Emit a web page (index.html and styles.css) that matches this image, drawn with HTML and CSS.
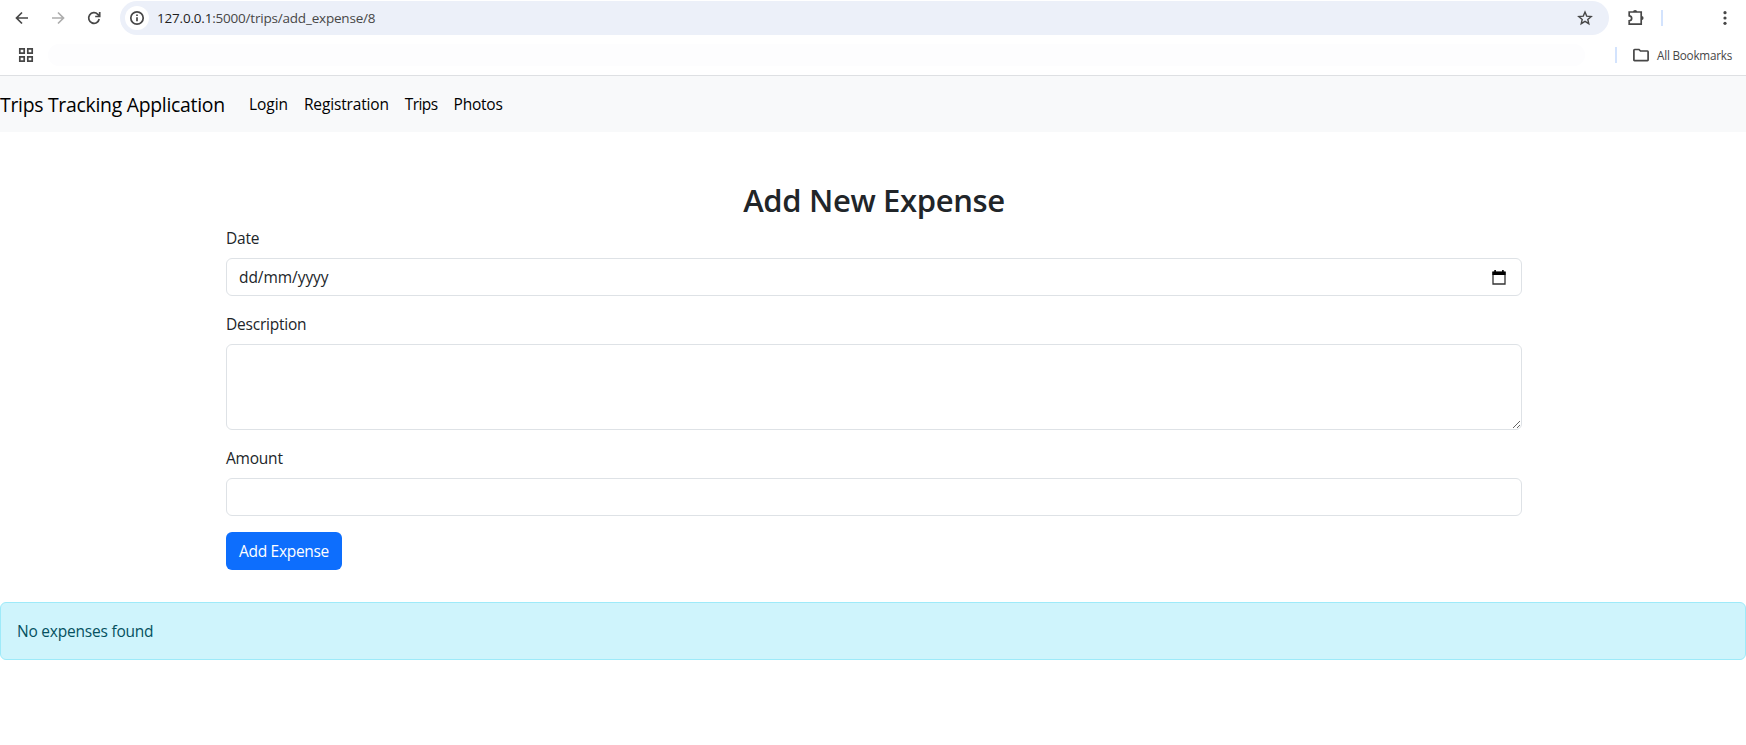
FILE: index.html
```html
<!DOCTYPE html>
<html lang="en">
<head>
<meta charset="utf-8">
<title>Add New Expense</title>
<link rel="stylesheet" href="styles.css">
</head>
<body>
<header class="browser">
  <div class="toolbar">
    <svg class="icon back" viewBox="0 0 16 16"><path d="M14 8H3M8 2.500 2.500 8 8 13.500"/></svg>
    <svg class="icon forward" viewBox="0 0 16 16"><path d="M2 8h11M8 2.500 13.500 8 8 13.500"/></svg>
    <svg class="icon reload" viewBox="0 0 16 16"><path d="M13.200 9A5.300 5.300 0 1 1 11.800 4.300L13.500 6M13.700 2v4.500H9.200"/></svg>
    <div class="address">
      <span class="site-info"><svg class="icon" viewBox="0 0 16 16"><circle cx="8" cy="8" r="6.200"/><path d="M8 7.200v4M8 4.600v1.500"/></svg></span>
      <span class="url"><b>127.0.0.1</b>:5000/trips/add_expense/8</span>
      <svg class="icon star" viewBox="0 0 16 16"><path d="M8 2 9.700 6.100 14.200 6.500 10.800 9.400 11.800 13.700 8 11.400 4.200 13.700 5.200 9.400 1.800 6.500 6.300 6.100Z"/></svg>
    </div>
    <svg class="icon puzzle" viewBox="0 0 18 18"><path d="M2.200 3H14.200V15.200H2.200V11.800C5.500 11.600 5.500 7 2.200 6.800Z"/><path class="solid" d="M6 3a2.100 2.100 0 0 1 4.200 0ZM14.500 7a2.100 2.100 0 0 1 0 4.200Z"/></svg>
    <i class="divider"></i>
    <svg class="icon dots" viewBox="0 0 16 16"><circle cx="8" cy="2.700" r="1.600"/><circle cx="8" cy="8" r="1.600"/><circle cx="8" cy="13.300" r="1.600"/></svg>
  </div>
  <div class="bookmarks">
    <svg class="icon apps" viewBox="0 0 16 16"><path d="M1.800 1.800h4.400v4.400h-4.400zM9.800 1.800h4.400v4.400h-4.400zM1.800 9.800h4.400v4.400h-4.400zM9.800 9.800h4.400v4.400h-4.400z"/></svg>
    <div class="bookmark-strip"></div>
    <i class="divider"></i>
    <svg class="icon folder" viewBox="0 0 16 14"><path d="M.9 12V2.200Q.9 1.500 1.600 1.500H6L7.500 3h7q.6 0 .6.700V12q0 .6-.6.600h-13Q.9 12.600.9 12Z"/></svg>
    <span class="bookmarks-label">All Bookmarks</span>
  </div>
</header>
<nav class="navbar">
  <a class="brand">Trips Tracking Application</a>
  <a class="link login">Login</a>
  <a class="link registration">Registration</a>
  <a class="link trips">Trips</a>
  <a class="link photos">Photos</a>
</nav>
<main>
  <form class="container">
    <h2>Add New Expense</h2>
    <label>Date</label>
    <div class="control date"><span>dd/mm/yyyy</span>
      <svg class="calendar" viewBox="0 0 14 15"><path class="edge" d="M1 2.500h12V14H1Z"/><path class="top" d="M.4 1.500h13.200V5H.4ZM2.300 0h1.600v2H2.300ZM10.100 0h1.600v2h-1.600Z"/></svg>
    </div>
    <label for="description">Description</label>
    <textarea id="description" class="control description"></textarea>
    <label for="amount">Amount</label>
    <input id="amount" class="control" type="text">
    <button type="button" class="submit">Add Expense</button>
  </form>
  <div class="alert">No expenses found</div>
</main>
</body>
</html>
```
FILE: styles.css
```css
* { box-sizing: border-box; }
body { margin: 0; background: #fff; color: #212529; font: 15.5px/24px "Open Sans", "Noto Sans", sans-serif; letter-spacing: -.22px; overflow: hidden; }
.browser { height: 76px; border-bottom: 1px solid #dee0e3; }
.icon { display: block; flex: none; width: 16px; height: 16px; fill: none; stroke: #474747; stroke-width: 1.7; }
.toolbar { display: flex; align-items: center; height: 36px; padding-left: 14px; }
.back, .forward { margin-right: 20px; }
.forward { stroke: #adadad; }
.reload { margin-right: 18px; }
.address { display: flex; align-items: center; width: 1489px; height: 34px; padding-left: 5px; border-radius: 17px; background: #ecf0f9; }
.site-info { display: flex; align-items: center; justify-content: center; width: 24px; height: 24px; border-radius: 50%; background: #fff; }
.url { flex: 1; padding-left: 8px; font-size: 13.5px; letter-spacing: -.2px; color: #474747; }
.url b { font-weight: 400; color: #1f1f1f; }
.star { margin-right: 16px; stroke-width: 1.4; }
.puzzle { width: 18px; height: 18px; margin-left: 18px; }
.puzzle .solid { fill: #474747; stroke: none; }
.divider { width: 2px; height: 16px; background: #d3e3fd; }
.toolbar .divider { margin-left: 16px; }
.dots { margin-left: 54px; fill: #474747; stroke: none; }
.bookmarks { display: flex; align-items: center; height: 38px; padding-left: 18px; }
.bookmark-strip { flex: 1; height: 22px; margin: 0 30px 0 14px; border-radius: 11px; background: #fdfdfe; }
.bookmarks .divider { margin-right: 16px; }
.folder { height: 14px; }
.bookmarks-label { padding-left: 8px; width: 97px; font-size: 11.7px; letter-spacing: -.22px; color: #474747; white-space: nowrap; }
.navbar { display: flex; align-items: center; height: 56px; background: #f8f9fa; color: #000; }
.brand { width: 225px; margin-right: 24px; padding-top: 1px; font-size: 19.4px; letter-spacing: -.28px; white-space: nowrap; }
.link { margin-right: 16px; }
.login { letter-spacing: -.06px; }
.registration { letter-spacing: -.16px; }
.trips { letter-spacing: -.58px; }
.container { margin: 48px 224px 0 226px; }
h2 { margin: 0; padding-top: 1px; height: 46.4px; text-align: center; font-size: 31px; line-height: 38.4px; font-weight: 600; letter-spacing: -.35px; }
label { display: block; margin-bottom: 8px; }
.control { display: block; width: 100%; height: 38px; margin: 0 0 16px; padding: 6px 12px; border: 1px solid #dee2e6; border-radius: 6px; background: #fff; outline: 0; }
.description { height: 86px; }
.date { display: flex; align-items: center; justify-content: space-between; letter-spacing: -.06px; }
.calendar { width: 14px; height: 15px; margin-right: 3px; }
.edge { fill: none; stroke: #333; stroke-width: 1.3; }
.submit { display: block; width: 116px; height: 38px; padding: 0; border: 0; border-radius: 6px; background: #0d6efd; color: #fff; font: inherit; letter-spacing: -.3px; }
.alert { margin-top: 32px; height: 58px; padding: 16px; border: 1px solid #9eeaf9; border-radius: 6px; background: #cff4fc; color: #055160; }
```
